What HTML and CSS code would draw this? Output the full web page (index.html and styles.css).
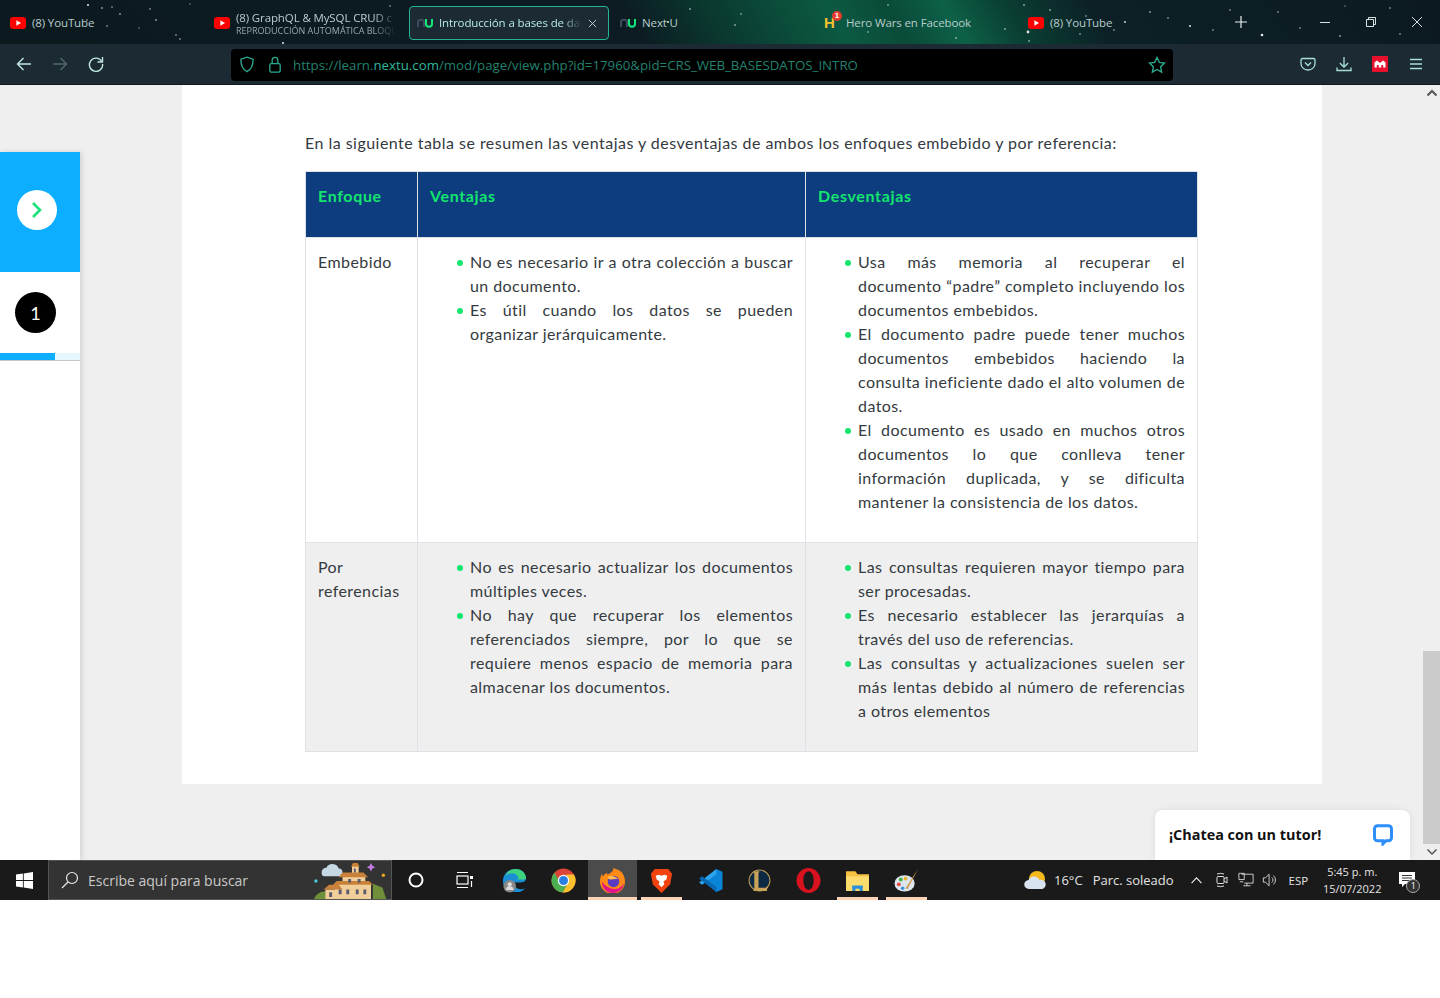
FILE: index.html
```html
<!DOCTYPE html>
<html lang="es">
<head>
<meta charset="utf-8">
<title>Introducción a bases de datos</title>
<link rel="stylesheet" href="styles.css">
</head>
<body>
<div class="screen">
  <header class="tabbar">
    <svg class="stars" width="1440" height="44" viewBox="0 0 1440 44" fill="#dfe9e6">
      <circle cx="88" cy="5" r="1"/><circle cx="102" cy="8" r=".8"/><circle cx="112" cy="7" r=".7"/><circle cx="87" cy="20" r=".7"/><circle cx="107" cy="26" r=".7"/><circle cx="120" cy="14" r=".8"/><circle cx="150" cy="9" r=".7"/><circle cx="156" cy="20" r=".8"/><circle cx="139" cy="28" r=".6"/><circle cx="190" cy="4" r=".6"/><circle cx="176" cy="35" r=".7"/><circle cx="180" cy="39" r=".7"/><circle cx="283" cy="43" r="1"/><circle cx="390" cy="6" r=".7"/><circle cx="668" cy="22" r="1"/><circle cx="690" cy="9" r=".8"/><circle cx="741" cy="14" r=".7"/><circle cx="735" cy="25" r=".8"/><circle cx="888" cy="5" r=".7"/><circle cx="868" cy="32" r=".7"/><circle cx="956" cy="38" r=".8"/><circle cx="1005" cy="29" r=".8"/><circle cx="1029" cy="41" r=".8"/><circle cx="1028" cy="32" r="1.4"/><circle cx="1024" cy="5" r=".8"/><circle cx="1050" cy="10" r=".8"/><circle cx="1086" cy="16" r=".7"/><circle cx="1125" cy="22" r=".9"/><circle cx="1080" cy="34" r=".7"/><circle cx="1114" cy="30" r=".7"/><circle cx="1150" cy="12" r=".8"/><circle cx="1168" cy="18" r=".7"/><circle cx="1190" cy="26" r="1"/><circle cx="1213" cy="30" r=".7"/><circle cx="1230" cy="10" r=".7"/><circle cx="1262" cy="35" r="1.3"/><circle cx="1278" cy="12" r=".7"/><circle cx="1300" cy="28" r=".7"/><circle cx="1340" cy="36" r=".8"/><circle cx="1390" cy="8" r=".7"/><circle cx="1345" cy="6" r=".6"/><circle cx="1400" cy="34" r=".7"/>
    </svg>
    <div class="tabs">
      <div class="tab">
        <svg class="fav" viewBox="0 0 16 16"><rect y="2" width="16" height="12" rx="3" fill="#f00"/><path d="M6.4 5.2 11 8l-4.600 2.800z" fill="#fff"/></svg>
        <span class="tab-title">(8) YouTube</span>
      </div>
      <div class="tab">
        <svg class="fav" viewBox="0 0 16 16"><rect y="2" width="16" height="12" rx="3" fill="#f00"/><path d="M6.4 5.2 11 8l-4.600 2.800z" fill="#fff"/></svg>
        <div class="tab-stack">
          <span class="tab-title fade">(8) GraphQL &amp; MySQL CRUD c</span>
          <span class="tab-sub fade">REPRODUCCIÓN AUTOMÁTICA BLOQUE</span>
        </div>
      </div>
      <div class="tab tab-active">
        <svg class="fav" viewBox="0 0 16 16" fill="none" stroke-width="2"><path d="M1 12V7c0-3 6-3 6 0v5" stroke="#3b4a5c"/><path d="M9 4v5c0 3.500 6 3.500 6 0V4" stroke="#14e87a"/></svg>
        <span class="tab-title tab-title-active fade">Introducción a bases de dat</span>
        <svg class="tab-x" viewBox="0 0 10 10" stroke="#c5ded9" stroke-width="1"><path d="M1 1l8 8M9 1l-8 8"/></svg>
      </div>
      <div class="tab tab-tight">
        <svg class="fav" viewBox="0 0 16 16" fill="none" stroke-width="2"><path d="M1 12V7c0-3 6-3 6 0v5" stroke="#3b4a5c"/><path d="M9 4v5c0 3.500 6 3.500 6 0V4" stroke="#14e87a"/></svg>
        <span class="tab-title">Next U</span>
      </div>
      <div class="tab tab-tight">
        <span class="fav hero">H<span class="hero-badge">1</span></span>
        <span class="tab-title">Hero Wars en Facebook</span>
      </div>
      <div class="tab tab-tight">
        <svg class="fav" viewBox="0 0 16 16"><rect y="2" width="16" height="12" rx="3" fill="#f00"/><path d="M6.4 5.2 11 8l-4.600 2.800z" fill="#fff"/></svg>
        <span class="tab-title">(8) YouTube</span>
      </div>
    </div>
    <svg class="win-plus" viewBox="0 0 14 14" stroke="#e6eeee" stroke-width="1.2"><path d="M7 1v12M1 7h12"/></svg>
    <div class="win-controls">
      <svg viewBox="0 0 12 12" stroke="#d8e4e3"><path d="M1 6.500h10"/></svg>
      <svg viewBox="0 0 12 12" fill="none" stroke="#d8e4e3"><path d="M1.500 3.500h7v7h-7zM3.500 3.500v-2h7v7h-2"/></svg>
      <svg viewBox="0 0 12 12" stroke="#d8e4e3"><path d="M1 1l10 10M11 1 1 11"/></svg>
    </div>
  </header>

  <nav class="toolbar">
    <div class="nav-btns">
      <svg viewBox="0 0 16 16" fill="none" stroke="#c0e8e0" stroke-width="1.4"><path d="M15 8H1.500M7.500 2 1.500 8l6 6"/></svg>
      <svg viewBox="0 0 16 16" fill="none" stroke="#4f6b68" stroke-width="1.4"><path d="M1 8h13.500M8.500 2l6 6-6 6"/></svg>
      <svg viewBox="0 0 16 16" fill="none" stroke="#c0e8e0" stroke-width="1.4"><path d="M13.600 5.200A6.600 6.600 0 1 0 14.600 8"/><path d="M14.500 1v5h-5"/></svg>
    </div>
    <div class="urlbar">
      <svg class="url-ico" viewBox="0 0 16 18" fill="none" stroke="#2ba98f" stroke-width="1.4"><path d="M8 1.200 1.500 3.400c0 6.600 1.600 10.600 6.500 13.200 4.900-2.600 6.500-6.600 6.500-13.200z"/></svg>
      <svg class="url-ico" viewBox="0 0 16 18" fill="none" stroke="#2ba98f" stroke-width="1.4"><rect x="2.500" y="8" width="11" height="9" rx="1.500"/><path d="M5 8V4.500a3 3 0 0 1 6 0V8"/></svg>
      <span class="url">https://learn.<b class="url-host">nextu.com</b>/mod/page/view.php?id=17960&amp;pid=CRS_WEB_BASESDATOS_INTRO</span>
      <svg class="url-star" viewBox="0 0 18 18" fill="none" stroke="#2ba98f" stroke-width="1.4"><path d="m9 1.500 2.300 4.900 5.200.7-3.800 3.700.9 5.300L9 13.500l-4.600 2.600.9-5.300L1.500 7.100l5.200-.7z"/></svg>
    </div>
    <div class="tool-btns">
      <svg viewBox="0 0 16 16" fill="none" stroke="#a8e0d6" stroke-width="1.300"><path d="M2.500 2.500h11a1.500 1.500 0 0 1 1.500 1.500v3.500c0 3.700-3 6.500-7 6.500s-7-2.800-7-6.500V4a1.500 1.500 0 0 1 1.500-1.500z"/><path d="m5 6.500 3 3 3-3"/></svg>
      <svg viewBox="0 0 16 16" fill="none" stroke="#a8e0d6" stroke-width="1.300"><path d="M8 1v10M3.800 7 8 11l4.200-4M1 11.500V14.500h14v-3"/></svg>
      <svg viewBox="0 0 16 16"><rect width="16" height="16" fill="#e8112d"/><path d="M2.500 11.500V6.500L5 4.500l3 2.500 3-2.500 2.500 2V11.500h-2.300V9H9.300v2.500H6.700V9H4.800v2.500z" fill="#fff"/></svg>
      <svg viewBox="0 0 16 16" stroke="#a8e0d6" stroke-width="1.300"><path d="M2 3.500h12M2 8h12M2 12.500h12"/></svg>
    </div>
  </nav>

  <div class="viewport">
    <aside class="side">
      <div class="side-top">
        <span class="side-toggle">
          <svg viewBox="0 0 14 20" fill="none" stroke="#17e27a" stroke-width="2.600"><path d="M3 3l7 7-7 7"/></svg>
        </span>
      </div>
      <div class="side-step"><span class="step-num">1</span></div>
      <div class="progress"><div class="progress-fill"></div></div>
    </aside>

    <main class="main">
      <article class="card">
        <p class="intro">En la siguiente tabla se resumen las ventajas y desventajas de ambos los enfoques embebido y por referencia:</p>
        <table class="tbl">
          <colgroup><col class="c1"><col class="c2"><col class="c3"></colgroup>
          <thead>
            <tr><th><p>Enfoque</p></th><th><p>Ventajas</p></th><th><p>Desventajas</p></th></tr>
          </thead>
          <tbody>
            <tr>
              <td><p>Embebido</p></td>
              <td>
                <ul>
                  <li><span class="ln">No es necesario ir a otra colección a buscar</span>un documento.</li>
                  <li><span class="ln">Es útil cuando los datos se pueden</span>organizar jerárquicamente.</li>
                </ul>
              </td>
              <td>
                <ul>
                  <li><span class="ln">Usa más memoria al recuperar el</span><span class="ln">documento “padre” completo incluyendo los</span>documentos embebidos.</li>
                  <li><span class="ln">El documento padre puede tener muchos</span><span class="ln">documentos embebidos haciendo la</span><span class="ln">consulta ineficiente dado el alto volumen de</span>datos.</li>
                  <li><span class="ln">El documento es usado en muchos otros</span><span class="ln">documentos lo que conlleva tener</span><span class="ln">información duplicada, y se dificulta</span>mantener la consistencia de los datos.</li>
                </ul>
              </td>
            </tr>
            <tr class="alt">
              <td><p>Por referencias</p></td>
              <td>
                <ul>
                  <li><span class="ln">No es necesario actualizar los documentos</span>múltiples veces.</li>
                  <li><span class="ln">No hay que recuperar los elementos</span><span class="ln">referenciados siempre, por lo que se</span><span class="ln">requiere menos espacio de memoria para</span>almacenar los documentos.</li>
                </ul>
              </td>
              <td>
                <ul>
                  <li><span class="ln">Las consultas requieren mayor tiempo para</span>ser procesadas.</li>
                  <li><span class="ln">Es necesario establecer las jerarquías a</span>través del uso de referencias.</li>
                  <li><span class="ln">Las consultas y actualizaciones suelen ser</span><span class="ln">más lentas debido al número de referencias</span>a otros elementos</li>
                </ul>
              </td>
            </tr>
          </tbody>
        </table>
      </article>
    </main>

    <div class="scrollbar">
      <svg class="sb-arrow" viewBox="0 0 12 8" fill="none" stroke="#555" stroke-width="2"><path d="M1.500 6.500 6 2l4.500 4.500"/></svg>
      <div class="sb-track"><div class="sb-thumb"></div></div>
      <svg class="sb-arrow" viewBox="0 0 12 8" fill="none" stroke="#555" stroke-width="1.500"><path d="M1.500 1.500 6 6l4.500-4.500"/></svg>
    </div>

    <div class="chat">
      <span class="chat-text">¡Chatea con un tutor!</span>
      <svg class="chat-ico" viewBox="0 0 20 22" fill="none" stroke="#2e8ffa" stroke-width="3"><path d="M4.500 1.800h11a3 3 0 0 1 3 3v9a3 3 0 0 1-3 3h-2.500l-3 3v-3h-5.500a3 3 0 0 1-3-3v-9a3 3 0 0 1 3-3z"/></svg>
    </div>
  </div>

  <footer class="taskbar">
    <svg class="start" viewBox="0 0 18 18" fill="#fff"><path d="M0 2.600 7.300 1.600V8.500H0zM8.200 1.500 18 0V8.500H8.200zM0 9.500H7.300V16.400L0 15.400zM8.200 9.500H18V18L8.200 16.500z"/></svg>
    <div class="search">
      <svg class="search-ico" viewBox="0 0 18 18" fill="none" stroke="#e8e8e8" stroke-width="1.200"><circle cx="11" cy="7" r="5.500"/><path d="M7 11 1 17"/></svg>
      <span class="search-text">Escribe aquí para buscar</span>
      <svg class="village" viewBox="0 0 80 40">
        <path d="M0 40c3-8 12-10 18-6l6 6z" fill="#6f8f3a"/>
        <path d="M62 40V24l10 4 4 12z" fill="#6f8f3a"/>
        <path d="M8 12a5 5 0 0 1 5-5 7 7 0 0 1 13 1 4 4 0 0 1 0 8H10a4 4 0 0 1-2-4z" fill="#c5d8e4"/>
        <circle cx="2" cy="21" r="1.800" fill="#49c9d8"/><circle cx="73" cy="15" r="1.800" fill="#e8a320"/>
        <path d="m60 2 1.500 3 3 1.500-3 1.500-1.500 3-1.500-3-3-1.500 3-1.500z" fill="#c77be8"/>
        <path d="M40 5h7v11h-7zM22 23h38v17H22zM12 30h14v10H12zM30 16h24v8H30z" fill="#f0cf9b"/>
        <path d="M41 2h5l2 4h-9zM10 30l6-5h10l4 5zM26 17l4-5h22l5 5zM20 25l4-4h34l4 4z" fill="#c9813a"/>
        <path d="M26 30h3v5h-3zM34 30h3v5h-3zM44 30h3v5h-3zM52 30h3v5h-3zM16 33h3v5h-3zM36 19h3v4h-3zM46 19h3v4h-3zM42 8h2v4h-2z" fill="#5c5a70"/>
      </svg>
    </div>
    <div class="apps">
      <span class="app app-sm"><svg viewBox="0 0 20 20" fill="none" stroke="#fff" stroke-width="2"><circle cx="9" cy="10" r="6.500"/></svg></span>
      <span class="app app-sm"><svg viewBox="0 0 20 20" fill="none" stroke="#fff" stroke-width="1.200"><path d="M1 2.500h11M1 17.500h11"/><rect x="1" y="6" width="11" height="8"/><rect x="14" y="6" width="3" height="3" fill="#fff" stroke="none"/><path d="M15.500 11v6"/></svg></span>
      <span class="app"><svg viewBox="0 0 26 26"><path d="M1 14C1 6 7 1 14 1c7 0 11 5 11 10 0 3-3 4-6 4h-7c0 4 3 7 8 7 2 0 3-.5 4-1-2 3-5 4-8 4C8 25 1 21 1 14z" fill="#1b8fd6"/><path d="M25 11c0-5-4-10-11-10C9 1 5 4 4 8c3-3 9-4 12 0 1 1 1 3 0 4h6c2 0 3-.5 3-1z" fill="#3fd27f"/><circle cx="8" cy="19" r="6.500" fill="#888"/><circle cx="8" cy="17" r="2.200" fill="#ddd"/><path d="M4 23a4 4 0 0 1 8 0z" fill="#ddd"/></svg></span>
      <span class="app"><svg viewBox="0 0 24 24"><circle cx="12" cy="12" r="11.500" fill="#db4437"/><path d="M22 6.250A11.500 11.500 0 0 1 11 23.500l5.100-8.800a5.800 5.800 0 0 0 .9-2.700c0-2.200-1.200-4.500-3-5.750z" fill="#fbc02d"/><path d="M11 23.500A11.500 11.500 0 0 1 3.400 4.400L8.500 14a5.800 5.800 0 0 0 7.600 .7z" fill="#4caf50"/><circle cx="12" cy="12" r="5.500" fill="#fff"/><circle cx="12" cy="12" r="4.300" fill="#2a7de1"/></svg></span>
      <span class="app app-on under"><svg viewBox="0 0 26 26"><path d="M23 5c2 3 3 6 3 9a13 13 0 0 1-26 0c0-3 1-6 2-8l1 3c1-2 3-3 4-4l1 2c3-2 6-3 6-7 3 1 8 3 9 5z" fill="#ff8a16"/><path d="M2 14c0 7 5 12 11 12s11-4 12-10c-3 5-9 7-14 5S4 17 2 14z" fill="#e31587"/><circle cx="14" cy="14" r="6" fill="#5b3bbf"/><path d="M8 9c4-2 9 0 11 3-3-1-4 0-7 0-2 0-4-1-4-3z" fill="#ffbd4f"/></svg></span>
      <span class="app under"><svg viewBox="0 0 22 26"><path d="M4 1h14l4 5-2 11-9 9-9-9L0 6z" fill="#f1430f"/><path d="M5 8l3-1 3 1 3-1 3 1-1 4-3 2 1 3-3 3-3-3 1-3-3-2z" fill="#fff"/></svg></span>
      <span class="app"><svg viewBox="0 0 24 24"><path d="M17.500 1 23.500 3.500V20.500L17.500 23 7 13z" fill="#0a84d6"/><path d="M17.500 1 1 14l3 2L17.500 6z" fill="#2aa5ee"/><path d="M17.500 23 1 10l3-2 13.500 10z" fill="#0969b5"/></svg></span>
      <span class="app"><svg viewBox="0 0 24 24" fill="none"><circle cx="12" cy="12" r="10" fill="#0d2a44" stroke="#b89a55" stroke-width="1"/><path d="M6 3h6l-1 2v14h7l2-2-1 5H6l1-2V5z" fill="#c9a35a"/></svg></span>
      <span class="app"><svg viewBox="0 0 24 24"><ellipse cx="12" cy="12" rx="11.500" ry="12" fill="#d8121f"/><ellipse cx="12" cy="12" rx="5" ry="9" fill="#1a1a1a"/></svg></span>
      <span class="app under"><svg viewBox="0 0 24 24"><path d="M1 3h9l2 3h11v16H1z" fill="#f5c242"/><path d="M1 8h22v14H1z" fill="#fbdc6c"/><path d="M7 22v-5h10v5h-3v-2h-4v2z" fill="#2a90d8"/><path d="M7 17h10v2H7z" fill="#2a90d8"/></svg></span>
      <span class="app under"><svg viewBox="0 0 26 26"><ellipse cx="11" cy="16" rx="10.500" ry="8.500" fill="#dce6ee"/><circle cx="7" cy="12" r="2" fill="#48b04a"/><circle cx="12" cy="11" r="2" fill="#e8b530"/><circle cx="5" cy="17" r="2" fill="#e04848"/><circle cx="9" cy="21" r="1.800" fill="#3a8fd8"/><path d="M25 1 14 22l-2-1z" fill="#d19a50"/></svg></span>
    </div>
    <div class="tray">
      <svg class="weather" viewBox="0 0 24 20"><circle cx="13" cy="9" r="8" fill="#f5b91e"/><path d="M5 19a4.500 4.500 0 0 1-.5-9 6 6 0 0 1 11 0 4.500 4.500 0 0 1 3 9z" fill="#d7e4f0"/></svg>
      <span class="temp">16°C</span>
      <span class="cond">Parc. soleado</span>
      <svg class="tray-chev" viewBox="0 0 14 10" fill="none" stroke="#eee" stroke-width="1.200"><path d="M1.500 8 7 2l5.500 6"/></svg>
      <svg class="tray-ico" viewBox="0 0 16 18" fill="none" stroke="#ddd"><rect x="3" y="5.500" width="7" height="7" rx="1"/><path d="M10 8l3-2v6l-3-2M3 3a5 2 0 0 1 7 0M3 15a5 2 0 0 0 7 0"/></svg>
      <svg class="tray-ico" viewBox="0 0 18 18" fill="none" stroke="#ddd"><path d="M4 2.500h13v10H7M1 1.500h6v7H1zM2 11h4M10 12.500v3M6 15.500h8"/></svg>
      <svg class="tray-ico" viewBox="0 0 18 18" fill="none" stroke="#ddd"><path d="M1.500 6.500h2.500l4-4v13l-4-4H1.500zM11 6a4 4 0 0 1 0 6M13 4a7 7 0 0 1 0 10"/></svg>
      <span class="lang">ESP</span>
      <div class="clock"><span>5:45 p. m.</span><span>15/07/2022</span></div>
      <span class="notif">
        <svg viewBox="0 0 18 18"><path d="M1 1h16v12H7l-3 3v-3H1z" fill="#fff"/><path d="M4 4.500h10M4 7h10M4 9.500h7" stroke="#333"/></svg>
        <span class="notif-badge">1</span>
      </span>
    </div>
  </footer>
</div>
</body>
</html>
```

FILE: styles.css
```css
* { box-sizing: border-box; }
html, body { margin: 0; padding: 0; background: #fff; }
body { font-family: "Open Sans", "Noto Sans", sans-serif; }
p { margin: 0; }
svg { display: block; flex: none; }

.screen { width: 1440px; height: 900px; display: flex; flex-direction: column; overflow: hidden; }

/* Tab strip */
.tabbar {
  position: relative; height: 44px; flex: none; display: flex; align-items: center;
  background: linear-gradient(60deg, #0c1a20 0, #0c1c22 44%, #0a3a30 50%, #0c5a43 58%, #0a4a39 62%, #0d6148 66%, #0a3f33 70%, #0c2026 76%, #0c1a20 100%);
}
.stars { position: absolute; left: 0; top: 0; }
.tabs { position: relative; display: flex; margin-left: 1px; width: 1223px; height: 44px; }
.tab { width: 200px; height: 34px; margin: 6px 4px 4px 0; padding-left: 9px; display: flex; align-items: center; gap: 6px; color: #b9cdcd; font-size: 11.5px; letter-spacing: -.12px; white-space: nowrap; flex: none; }
.tab-tight { padding-left: 7px; }
.tab-active { padding-left: 7px; background: #1c2b33; border: 1px solid #23b596; border-radius: 4px; }
.tab-title { display: block; line-height: 16px; }
.tab-title-active { width: 143px; color: #b6ebe0; }
.fade { -webkit-mask-image: linear-gradient(90deg, #000 86%, transparent 100%); mask-image: linear-gradient(90deg, #000 86%, transparent 100%); }
.tab-stack { display: flex; flex-direction: column; width: 160px; }
.tab-stack .tab-title { line-height: 15px; }
.tab-sub { font-size: 9px; line-height: 11px; letter-spacing: 0; color: #97a9a9; }
.fav { width: 16px; height: 16px; }
.hero { position: relative; color: #f2c230; font: bold 15px/16px "Liberation Sans", sans-serif; letter-spacing: 0; }
.hero-badge { position: absolute; left: 8px; top: -4px; width: 10px; height: 10px; border-radius: 50%; background: #e23b30; color: #fff; font-size: 8px; line-height: 10px; text-align: center; }
.tab-x { width: 9px; height: 9px; }
.win-plus { position: relative; width: 14px; height: 14px; margin-left: 10px; }
.win-controls { position: relative; display: flex; align-items: center; gap: 34px; margin-left: 71px; }
.win-controls svg { width: 12px; height: 12px; }

/* Toolbar */
.toolbar { height: 41px; flex: none; background: #1c2b33; display: flex; align-items: center; border-bottom: 1px solid #10191e; }
.nav-btns { width: 231px; padding-left: 16px; display: flex; gap: 20px; flex: none; }
.nav-btns svg { width: 16px; height: 16px; }
.urlbar { width: 942px; height: 32px; background: #000; border-radius: 4px; display: flex; align-items: center; padding: 0 7px 0 8px; gap: 12px; flex: none; margin-top: 1px; }
.url-ico { width: 16px; height: 17px; }
.url { flex: 1; color: #24806f; font-size: 13.27px; white-space: nowrap; margin-left: -2px; }
.url-host { font-weight: 400; color: #2fb79c; }
.url-star { width: 18px; height: 18px; }
.tool-btns { display: flex; gap: 20px; margin-left: 127px; align-items: center; }
.tool-btns svg { width: 16px; height: 16px; }

/* Page area */
.viewport { position: relative; flex: 1; display: flex; background: #efefef; min-height: 0; }
.side { width: 80px; flex: none; margin-top: 67px; background: #fff; box-shadow: 2px 0 5px rgba(0,0,0,.12); position: relative; z-index: 1; }
.side-top { height: 120px; background: #0dadff; display: flex; align-items: center; justify-content: center; padding: 0 6px 4px 0; }
.side-toggle { width: 40px; height: 40px; border-radius: 50%; background: #fff; display: flex; align-items: center; justify-content: center; }
.side-toggle svg { width: 14px; height: 20px; }
.side-step { height: 81px; padding: 20px 0 0 15px; }
.step-num { display: flex; width: 41px; height: 41px; border-radius: 50%; background: #000; color: #fff; align-items: center; justify-content: center; font: 18px "Lato", sans-serif; }
.progress { height: 8px; background: #e6f6ff; border-bottom: 1px solid #c6c6c6; }
.progress-fill { width: 55px; height: 7px; background: #0dadff; }
.main { flex: none; width: 1343px; padding-left: 102px; }
.card { width: 1140px; height: 699px; background: #fff; padding: 46px 124px 0 123px; }
.intro { font: 16px/24px "Lato", sans-serif; letter-spacing: .47px; color: #343a40; height: 40px; white-space: nowrap; }

.tbl { width: 892px; table-layout: fixed; border-collapse: collapse; font: 16px/24px "Lato", sans-serif; letter-spacing: .42px; color: #343a40; }
.c1 { width: 112px; } .c2 { width: 388px; } .c3 { width: 392px; }
.tbl th, .tbl td { border: 1px solid #dee2e6; padding: 12px; vertical-align: top; text-align: left; }
.tbl p { margin: 0 0 16px; }
.tbl th { background: #0d3c7f; color: #13e56d; font-weight: 700; letter-spacing: .65px; padding-bottom: 13px; }
.tbl ul { margin: 0 0 16px; padding: 0 0 0 40px; list-style: none; }
.tbl li { position: relative; }
.tbl li::before { content: ""; position: absolute; left: -13px; top: 10px; width: 6px; height: 6px; border-radius: 50%; background: #13e56d; }
.ln { display: block; text-align: justify; text-align-last: justify; }
.alt td { background: #efefef; }

.scrollbar { width: 17px; margin-left: auto; display: flex; flex-direction: column; align-items: center; flex: none; }
.sb-arrow { width: 12px; height: 8px; margin: 4px 0; }
.sb-track { flex: 1; width: 100%; padding-top: 550px; }
.sb-thumb { height: 100%; background: #cbcbcb; }

.chat { position: absolute; left: 1155px; top: 725px; width: 255px; height: 50px; background: #fff; border-radius: 8px 8px 0 0; box-shadow: 0 0 8px rgba(0,0,0,.08); display: flex; align-items: center; justify-content: space-between; padding: 0 17px 0 14px; z-index: 2; }
.chat-text { font-size: 14.4px; font-weight: 700; color: #111; margin-bottom: 2px; }
.chat-ico { width: 20px; height: 22px; }

/* Taskbar */
.taskbar { height: 40px; flex: none; background: #1a1a1a; display: flex; align-items: center; color: #e4e4e4; }
.start { width: 17px; height: 17px; margin: 0 15px 0 16px; }
.search { width: 344px; height: 40px; background: #333; border: 1px solid #555; display: flex; align-items: center; padding-left: 12px; flex: none; position: relative; }
.search-ico { width: 18px; height: 18px; }
.search-text { margin-left: 9px; font-size: 14px; color: #c9c9c9; }
.village { position: absolute; right: 0; bottom: 0; width: 78px; height: 38px; }
.apps { display: flex; height: 40px; flex: none; }
.app { width: 49px; height: 40px; display: flex; align-items: center; justify-content: center; position: relative; }
.app svg { width: 25px; height: 25px; }
.app-sm svg { width: 20px; height: 20px; }
.app-on { background: #4b4b4b; }
.under::after { content: ""; position: absolute; left: 4px; right: 4px; bottom: 0; height: 3px; background: #fdd3b8; }
.app-on::after { left: 0; right: 0; }
.tray { display: flex; align-items: center; flex: 1; height: 40px; margin-left: 93px; font-size: 13px; }
.weather { width: 24px; height: 20px; }
.temp { margin-left: 6px; }
.cond { margin-left: 10px; }
.tray-chev { width: 13px; height: 9px; margin-left: 16px; }
.tray-ico { width: 16px; height: 18px; margin-left: 8px; }
.tray-chev + .tray-ico { margin-left: 11px; }
.lang { margin-left: 11px; font-size: 11.5px; }
.clock { width: 84px; margin-left: 2px; display: flex; flex-direction: column; align-items: center; font-size: 11px; line-height: 17px; }
.notif { position: relative; margin-left: 4px; }
.notif svg { width: 18px; height: 18px; }
.notif-badge { position: absolute; left: 8px; top: 8px; width: 14px; height: 14px; border-radius: 50%; background: #333; border: 1px solid #aaa; font-size: 9px; line-height: 12px; text-align: center; color: #fff; }
```
